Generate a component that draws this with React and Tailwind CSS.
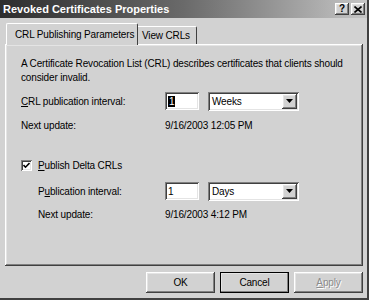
import React from 'react';

const raised =
  'shadow-[inset_-1px_-1px_#404040,inset_1px_1px_#ffffff,inset_-2px_-2px_#808080,inset_2px_2px_#e4e4e4]';
const sunken =
  'shadow-[inset_1px_1px_#808080,inset_-1px_-1px_#ffffff,inset_2px_2px_#404040,inset_-2px_-2px_#e4e4e4]';

const TitleButton = ({ children }) => (
  <div className={`w-[14px] h-[12px] bg-[#d2d2d2] flex items-center justify-center text-[10px] leading-none font-bold text-black ${raised}`}>
    {children}
  </div>
);

const Dropdown = ({ value }) => (
  <div className={`w-[91px] h-[19px] bg-white flex items-center justify-between p-[2px] ${sunken}`}>
    <span className="pl-[2px]">{value}</span>
    <div className={`w-[15px] h-[15px] bg-[#d2d2d2] flex items-center justify-center ${raised}`}>
      <svg width="7" height="4" viewBox="0 0 7 4">
        <path d="M0 0 H7 L3.5 4 Z" fill="#000" />
      </svg>
    </div>
  </div>
);

const NumberBox = ({ value, selected }) => (
  <div className={`w-[34px] h-[18px] bg-white flex items-center pl-[3px] ${sunken}`}>
    <span className={`leading-[11px] ${selected ? 'bg-black text-white px-px' : ''}`}>{value}</span>
  </div>
);

const Button = ({ children, isDefault, disabled }) => (
  <div
    className={`w-[69px] h-[21px] flex items-center justify-center bg-[#d2d2d2] ${raised} ${
      isDefault ? 'outline outline-1 outline-black -outline-offset-1' : ''
    } ${disabled ? 'text-[#8c8c8c] [text-shadow:1px_1px_#ffffff]' : 'text-black'}`}
  >
    {children}
  </div>
);

export default function App() {
  return (
    <div className="w-[380px] h-[308px] bg-white font-['Liberation_Sans',Arial,sans-serif] text-black">
      <div className="w-[369px] h-[300px] bg-[#d2d2d2] flex flex-col border-r-2 border-b-2 border-r-[#404040] border-b-[#404040]">
        {/* Title bar */}
        <div className="h-[18px] flex items-center justify-between pl-[3px] pr-[2px] bg-gradient-to-r from-[#2e2e2e] via-[#6a6a6a] to-[#c6c6c6]">
          <span className="text-white font-bold text-[11px] leading-none">Revoked Certificates Properties</span>
          <div className="flex gap-[2px]">
            <TitleButton>?</TitleButton>
            <TitleButton>
              <svg width="8" height="7" viewBox="0 0 8 7">
                <path d="M0.5 0.5 L7.5 6.5 M7.5 0.5 L0.5 6.5" stroke="#000" strokeWidth="1.6" />
              </svg>
            </TitleButton>
          </div>
        </div>

        <div className="pl-[5px] pt-[5px] text-[10px] tracking-[-0.15px]">
          {/* Tabs */}
          <div className="flex items-end h-[21px] pl-px">
            <div className="relative z-10 -mb-px h-[22px] w-[132px] bg-[#d2d2d2] border-t border-l border-white border-r border-r-[#404040] rounded-t-[2px] flex items-center pl-[8px] whitespace-nowrap">
              CRL Publishing Parameters
            </div>
            <div className="h-[18px] w-[59px] bg-[#d2d2d2] border-t border-white border-r border-r-[#404040] rounded-tr-[2px] flex items-center pl-[4px] whitespace-nowrap">
              View CRLs
            </div>
          </div>

          {/* Panel */}
          <div className={`w-[358px] h-[222px] pl-[16px] pt-[13px] ${raised}`}>
            <p className="w-[332px] leading-[14px]">
              A Certificate Revocation List (CRL) describes certificates that clients should consider invalid.
            </p>

            <div className="mt-[6px] h-[20px] flex items-center">
              <span className="w-[144px]">
                <span className="underline">C</span>RL publication interval:
              </span>
              <NumberBox value="1" selected />
              <div className="ml-[9px]">
                <Dropdown value="Weeks" />
              </div>
            </div>

            <div className="mt-[7px] h-[14px] flex items-center">
              <span className="w-[144px]">Next update:</span>
              <span>9/16/2003 12:05 PM</span>
            </div>

            <div className="mt-[26px] h-[14px] flex items-center">
              <div className={`w-[11px] h-[11px] bg-white flex items-center justify-center ${sunken}`}>
                <svg width="7" height="7" viewBox="0 0 7 7">
                  <path d="M0.5 3 L2.5 5.2 L6.5 1" stroke="#000" strokeWidth="1.6" fill="none" />
                </svg>
              </div>
              <span className="ml-[6px]">
                <span className="underline">P</span>ublish Delta CRLs
              </span>
            </div>

            <div className="pl-[17px]">
              <div className="mt-[9px] h-[20px] flex items-center">
                <span className="w-[127px]">
                  P<span className="underline">u</span>blication interval:
                </span>
                <NumberBox value="1" />
                <div className="ml-[9px]">
                  <Dropdown value="Days" />
                </div>
              </div>

              <div className="mt-[6px] h-[14px] flex items-center">
                <span className="w-[127px]">Next update:</span>
                <span>9/16/2003 4:12 PM</span>
              </div>
            </div>
          </div>

          {/* Buttons */}
          <div className="w-[358px] mt-[6px] flex justify-end gap-[5px]">
            <Button>OK</Button>
            <Button isDefault>Cancel</Button>
            <Button disabled>
              <span className="underline">A</span>pply
            </Button>
          </div>
        </div>
      </div>
    </div>
  );
}
